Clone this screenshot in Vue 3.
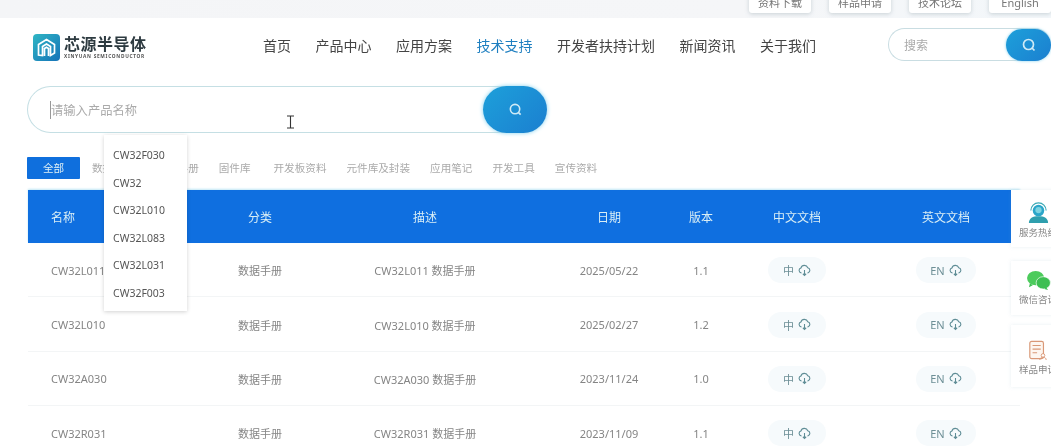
<script setup>
const topLinks = ['资料下载', '样品申请', '技术论坛', 'English']
const navs = ['首页', '产品中心', '应用方案', '技术支持', '开发者扶持计划', '新闻资讯', '关于我们']
const tabs = ['数据手册', '用户手册', '固件库', '开发板资料', '元件库及封装', '应用笔记', '开发工具', '宣传资料']
const heads = ['名称', '分类', '描述', '日期', '版本', '中文文档', '英文文档']
const rows = [
  ['CW32L011', '2025/05/22', '1.1'],
  ['CW32L010', '2025/02/27', '1.2'],
  ['CW32A030', '2023/11/24', '1.0'],
  ['CW32R031', '2023/11/09', '1.1']
]
const suggestions = ['CW32F030', 'CW32', 'CW32L010', 'CW32L083', 'CW32L031', 'CW32F003']
</script>

<template>
  <div class="page">
    <div class="topbar">
      <span v-for="t in topLinks" :key="t" class="toplink">{{ t }}</span>
    </div>

    <header class="header">
      <div class="logo">
        <svg class="mark" viewBox="0 0 27 27" width="27" height="27">
          <defs>
            <linearGradient id="lg" x1="0" y1="0" x2="1" y2="1">
              <stop offset="0" stop-color="#2fb6c4" />
              <stop offset="1" stop-color="#1673b8" />
            </linearGradient>
          </defs>
          <rect width="27" height="27" rx="4" fill="url(#lg)" />
          <path d="M5.500 21V10.500L13.500 5.500L21.500 10.500V19L17.500 21.500V12.500L13.500 10L9.500 12.500V21.500ZM11.500 22V14.500L13.500 13.300L15.500 14.500V22" fill="none" stroke="#fff" stroke-width="1.700" />
        </svg>
        <div class="brand">
          <div class="brand-cn">芯源半导体</div>
          <div class="brand-en">XINYUAN SEMICONDUCTOR</div>
        </div>
      </div>
      <nav class="nav">
        <span v-for="n in navs" :key="n" :class="['nav-item', { active: n === '技术支持' }]">{{ n }}</span>
      </nav>
      <div class="mini-search">
        <span class="mini-ph">搜索</span>
        <span class="mini-btn">
          <svg viewBox="0 0 16 16" width="16" height="16"><circle cx="7.500" cy="7.500" r="5" fill="none" stroke="#cfeaf6" stroke-width="1.700" /><path d="M11 11l2.500 2.500" stroke="#cfeaf6" stroke-width="1.700" /></svg>
        </span>
      </div>
    </header>

    <main class="main">
      <div class="big-search">
        <span class="big-ph">请输入产品名称</span>
        <span class="big-btn">
          <svg viewBox="0 0 16 16" width="15" height="15"><circle cx="7.500" cy="7.500" r="5" fill="none" stroke="#cfeaf6" stroke-width="1.700" /><path d="M11 11l2.500 2.500" stroke="#cfeaf6" stroke-width="1.700" /></svg>
        </span>
      </div>

      <div class="tabs">
        <span class="tab-all">全部</span>
        <span v-for="t in tabs" :key="t" class="tab">{{ t }}</span>
      </div>

      <div class="table">
        <div class="row head">
          <span v-for="h in heads" :key="h" class="cell">{{ h }}</span>
        </div>
        <div v-for="r in rows" :key="r[0]" class="row body">
          <span class="cell">{{ r[0] }}</span>
          <span class="cell">数据手册</span>
          <span class="cell">{{ r[0] }} 数据手册</span>
          <span class="cell">{{ r[1] }}</span>
          <span class="cell">{{ r[2] }}</span>
          <span class="cell">
            <span class="pill zh">中
              <svg viewBox="0 0 12 12" width="13" height="13"><path d="M3.200 8.200H3a2.300 2.300 0 0 1-.3-4.500A3.300 3.300 0 0 1 9 3.500a2.400 2.400 0 0 1 .1 4.700H8.800M6 5.500v5M4.500 9L6 10.500 7.500 9" fill="none" stroke="#5f8d96" stroke-width="1" /></svg>
            </span>
          </span>
          <span class="cell">
            <span class="pill en">EN
              <svg viewBox="0 0 12 12" width="13" height="13"><path d="M3.200 8.200H3a2.300 2.300 0 0 1-.3-4.500A3.300 3.300 0 0 1 9 3.500a2.400 2.400 0 0 1 .1 4.700H8.800M6 5.500v5M4.500 9L6 10.500 7.500 9" fill="none" stroke="#5f8d96" stroke-width="1" /></svg>
            </span>
          </span>
        </div>
      </div>
    </main>

    <ul class="dropdown">
      <li v-for="s in suggestions" :key="s">{{ s }}</li>
    </ul>

    <svg class="ibeam" viewBox="0 0 9 14" width="9" height="14"><path d="M1 1h7M4.500 1v12M1 13h7" fill="none" stroke="#333" stroke-width="1.100" /></svg>

    <aside class="side">
      <div class="side-card first">
        <svg viewBox="0 0 24 24" width="23" height="23">
          <path d="M4 10a8 8 0 0 1 16 0" fill="none" stroke="#39a9b5" stroke-width="1.200" />
          <circle cx="12" cy="10" r="6" fill="#2ba6c9" />
          <circle cx="12" cy="9.500" r="3.300" fill="#7fd3e0" />
          <path d="M2 23c0-5 4-7 10-7s10 2 10 7z" fill="#2f9fae" />
        </svg>
        <span>服务热线</span>
      </div>
      <div class="side-card second">
        <svg viewBox="0 0 26 22" width="25" height="21">
          <ellipse cx="10" cy="8.500" rx="9" ry="7.500" fill="#4ccb5c" />
          <ellipse cx="18" cy="13.500" rx="7.500" ry="6.500" fill="#3dbf52" stroke="#fff" stroke-width=".7" />
          <path d="M4 14l-1 4 4-2zM21 18l2 3-4-1z" fill="#3dbf52" />
        </svg>
        <span>微信咨询</span>
      </div>
      <div class="side-card third">
        <svg viewBox="0 0 22 24" width="20" height="22">
          <rect x="2" y="2.500" width="15" height="19" rx="2" fill="#fdf6f0" stroke="#d99877" stroke-width="1.300" />
          <path d="M5 7h9M5 11h9M5 15h5" stroke="#d99877" stroke-width="1.200" />
          <circle cx="16.500" cy="18" r="2" fill="#fff" stroke="#d99877" />
          <path d="M13 23c0-2 1.500-3 3.500-3s3.500 1 3.500 3" fill="none" stroke="#d99877" />
        </svg>
        <span>样品申请</span>
      </div>
    </aside>
  </div>
</template>

<style>
html, body { margin: 0; overflow: hidden; background: #fff; }
</style>

<style scoped>
.page {
  position: relative;
  width: 1051px;
  height: 446px;
  overflow: hidden;
  background: #fff;
  font-family: "Noto Sans", "Noto Sans CJK SC", sans-serif;
  filter: blur(.45px);
}
.topbar {
  height: 18px;
  background: linear-gradient(90deg, #f4f5f7, #f5f6f8 70%, #f3f7fa);
  display: flex;
  justify-content: flex-end;
  gap: 18px;
  align-items: flex-end;
  overflow: hidden;
}
.toplink {
  width: 62px;
  height: 20px;
  margin-bottom: 5px;
  padding-bottom: 3px;
  box-sizing: border-box;
  background: #fff;
  border-radius: 3px;
  box-shadow: 0 1px 4px rgba(120, 140, 150, .35);
  color: #777;
  font-size: 11px;
  line-height: 14px;
  text-align: center;
  display: flex;
  align-items: flex-end;
  justify-content: center;
  flex: none;
}
.header {
  height: 58px;
  display: flex;
  align-items: center;
  padding-left: 33px;
}
.logo { display: flex; align-items: center; gap: 4px; width: 230px; height: 30px; flex: none; margin-top: 1px; }
.mark { flex: none; }
.brand-cn { font-size: 16px; line-height: 18px; font-weight: 700; color: #2d3a40; letter-spacing: .5px; }
.brand-en { font-size: 4.800px; line-height: 7px; font-weight: 700; color: #555; letter-spacing: .7px; white-space: nowrap; }
.nav { display: flex; gap: 24.500px; font-size: 14px; color: #444; white-space: nowrap; margin-top: -2px; }
.nav-item { line-height: 20px; }
.nav-item.active { color: #1e7fc0; }
.mini-search {
  margin-left: 72px;
  width: 163px;
  height: 33px;
  box-sizing: border-box;
  border: 1px solid #c9dde2;
  border-right: 0;
  border-radius: 17px;
  display: flex;
  align-items: center;
  justify-content: space-between;
  padding-left: 15px;
  flex: none;
  margin-top: -5px;
}
.mini-ph { font-size: 12px; color: #aaa; }
.mini-btn, .big-btn {
  display: flex;
  align-items: center;
  justify-content: center;
  background: linear-gradient(135deg, #1da0da, #1b7fd0);
}
.mini-btn { width: 45px; height: 32px; border-radius: 16px; box-shadow: 0 0 3px #7fd0ee; }
.main { padding: 10px 0 0 27px; }
.big-search {
  width: 520px;
  height: 47px;
  box-sizing: border-box;
  border: 1px solid #c5dfe4;
  border-right: 0;
  border-radius: 24px;
  display: flex;
  align-items: center;
  justify-content: space-between;
  padding-left: 22px;
}
.big-ph { font-size: 12.300px; color: #aaa; border-left: 1px solid #999; }
.big-btn { width: 64px; height: 47px; border-radius: 24px; box-shadow: 0 0 4px #7fd0ee; margin-right: 0; }
.tabs {
  display: flex;
  align-items: center;
  margin-top: 24px;
  height: 22px;
  gap: 20px;
  font-size: 10.600px;
  color: #aaa;
  white-space: nowrap;
}
.tab { position: relative; top: -1px; }
.tab:nth-child(4) { margin-right: 3px; }
.tab:nth-child(2) { margin-right: 2px; }
.tab-all {
  width: 53px;
  height: 22px;
  line-height: 22px;
  text-align: center;
  background: #0f6fdd;
  color: #dff0f5;
  border-radius: 1px;
  margin-right: -8px;
  flex: none;
}
.table { margin-top: 11px; margin-left: 1px; width: 992px; }
.row {
  display: grid;
  grid-template-columns: 180px 104px 226px 142px 42px 150px 148px;
  align-items: center;
  text-align: center;
}
.row .cell:first-child { text-align: left; padding-left: 23px; }
.head {
  height: 53px;
  background: #0f6fe0;
  color: #d9eef5;
  font-size: 12px;
  box-shadow: 0 -1px 2px #bfe6f5;
}
.body {
  height: 54.400px;
  padding-top: 1px;
  border-bottom: 1px solid #f3f5f6;
  box-sizing: border-box;
  color: #858585;
  font-size: 11px;
}
.pill {
  display: inline-flex;
  align-items: center;
  justify-content: center;
  gap: 4px;
  height: 26px;
  border-radius: 13px;
  background: #f6fafc;
  color: #6d8f96;
  font-size: 11px;
}
.pill.zh { width: 58px; }
.pill.en { width: 60px; }
.dropdown {
  position: absolute;
  left: 104px;
  top: 135px;
  width: 83px;
  height: 176px;
  margin: 0;
  padding: 7px 0 0 9px;
  box-sizing: border-box;
  list-style: none;
  background: #fff;
  box-shadow: 0 1px 4px rgba(0, 0, 0, .18);
  font-size: 10.500px;
  color: #555;
}
.dropdown li { height: 27.500px; line-height: 27.500px; }
.ibeam { position: absolute; left: 286px; top: 115px; }
.side { position: absolute; left: 1011px; top: 190px; width: 60px; display: flex; flex-direction: column; }
.side-card {
  display: flex;
  flex-direction: column;
  align-items: center;
  gap: 3px;
  background: #fff;
  box-shadow: 0 0 4px rgba(120, 160, 180, .16);
  font-size: 9.500px;
  line-height: 12px;
  color: #888;
  width: 60px;
  padding-right: 6px;
  box-sizing: border-box;
  white-space: nowrap;
}
.side-card.first { height: 57px; padding-top: 11px; }
.side-card.second { height: 54px; margin-top: 14px; padding-top: 9px; }
.side-card.third { height: 62px; margin-top: 10px; padding-top: 14px; }
</style>
